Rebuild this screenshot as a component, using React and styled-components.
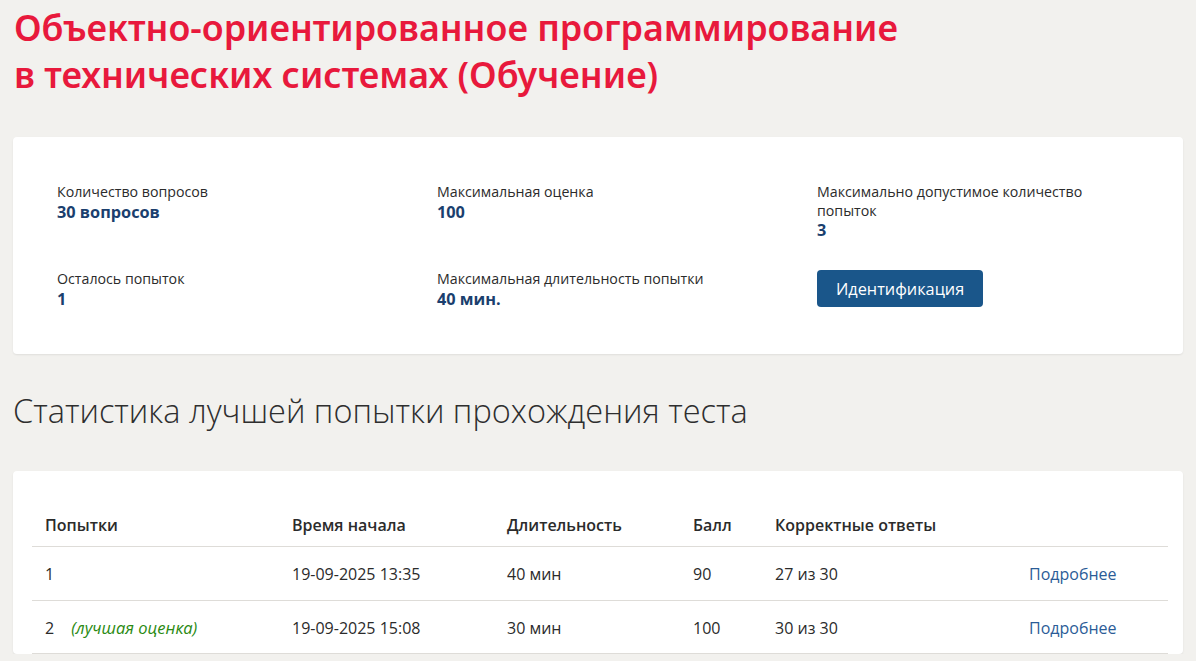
import React from 'react';
import styled, { createGlobalStyle } from 'styled-components';

const GlobalStyle = createGlobalStyle`
  html, body {
    margin: 0;
    padding: 0;
    background: #f2f1ee;
  }
  body {
    font-family: "Open Sans", "Noto Sans", sans-serif;
    color: #2b2b2b;
  }
`;

const Page = styled.div`
  padding: 4px 13px 0 13px;
`;

const Title = styled.h1`
  margin: 0;
  font-family: "Noto Sans", sans-serif;
  font-weight: 600;
  font-size: 35.8px;
  line-height: 47px;
  color: #e8193c;
  padding-left: 1px;
`;

const Card = styled.div`
  background: #fff;
  border-radius: 4px;
  box-shadow: 0 1px 2px rgba(0, 0, 0, 0.08);
  padding: ${(p) => p.$pad};
`;

const InfoCard = styled(Card)`
  margin-top: 39px;
  display: grid;
  grid-template-columns: 380px 380px 1fr;
  row-gap: 30px;
`;

const Field = styled.div`
  display: flex;
  flex-direction: column;
  max-width: 290px;
`;

const Label = styled.div`
  font-size: 14.2px;
  line-height: 18.5px;
`;

const Value = styled.div`
  font-size: 16.3px;
  font-weight: 700;
  line-height: 20px;
  color: #1b3f6e;
`;

const Button = styled.button`
  align-self: flex-start;
  justify-self: start;
  height: 37px;
  padding: 0 19px;
  border: none;
  border-radius: 4px;
  background: #1a568a;
  color: #fff;
  font-family: "Open Sans", sans-serif;
  font-size: 16.3px;
  cursor: pointer;
`;

const SectionTitle = styled.h2`
  margin: 38px 0 41px;
  font-family: "Open Sans", sans-serif;
  font-weight: 300;
  font-size: 32.5px;
  line-height: 38px;
  color: #2e2e2e;
`;

const Table = styled.table`
  width: 100%;
  border-collapse: collapse;
  table-layout: fixed;
  font-size: 16px;
`;

const Th = styled.th`
  box-sizing: border-box;
  text-align: left;
  font-weight: 600;
  padding: 0 13px;
  height: 42px;
  border-bottom: 1px solid #dedcd8;
  width: ${(p) => p.$w}px;
`;

const Td = styled.td`
  padding: 2px 13px 0;
  height: 50.5px;
  border-bottom: 1px solid #dedcd8;
`;

const Best = styled.em`
  margin-left: 17px;
  color: #2a8a12;
  font-size: 16.5px;
`;

const More = styled.a`
  color: #2b5c97;
  text-decoration: none;
`;

const fields = [
  { label: 'Количество вопросов', value: '30 вопросов' },
  { label: 'Максимальная оценка', value: '100' },
  { label: 'Максимально допустимое количество попыток', value: '3' },
  { label: 'Осталось попыток', value: '1' },
  { label: 'Максимальная длительность попытки', value: '40 мин.' },
];

const columns = [
  { title: 'Попытки', w: 247 },
  { title: 'Время начала', w: 215 },
  { title: 'Длительность', w: 186 },
  { title: 'Балл', w: 82 },
  { title: 'Корректные ответы', w: 254 },
  { title: '', w: 152 },
];

const attempts = [
  { n: 1, best: false, start: '19-09-2025 13:35', dur: '40 мин', score: 90, correct: '27 из 30' },
  { n: 2, best: true, start: '19-09-2025 15:08', dur: '30 мин', score: 100, correct: '30 из 30' },
];

export default function App() {
  return (
    <>
      <GlobalStyle />
      <Page>
        <Title>
          Объектно-ориентированное программирование
          <br />
          в технических системах (Обучение)
        </Title>

        <InfoCard $pad="46px 44px 45px">
          {fields.map((f) => (
            <Field key={f.label}>
              <Label>{f.label}</Label>
              <Value>{f.value}</Value>
            </Field>
          ))}
          <Button>Идентификация</Button>
        </InfoCard>

        <SectionTitle>Статистика лучшей попытки прохождения теста</SectionTitle>

        <Card $pad="34px 15px 0 19px">
          <Table>
            <thead>
              <tr>
                {columns.map((c) => (
                  <Th key={c.w} $w={c.w}>{c.title}</Th>
                ))}
              </tr>
            </thead>
            <tbody>
              {attempts.map((a) => (
                <tr key={a.n}>
                  <Td>
                    {a.n}
                    {a.best && <Best>(лучшая оценка)</Best>}
                  </Td>
                  <Td>{a.start}</Td>
                  <Td>{a.dur}</Td>
                  <Td>{a.score}</Td>
                  <Td>{a.correct}</Td>
                  <Td><More href="#">Подробнее</More></Td>
                </tr>
              ))}
            </tbody>
          </Table>
        </Card>
      </Page>
    </>
  );
}
